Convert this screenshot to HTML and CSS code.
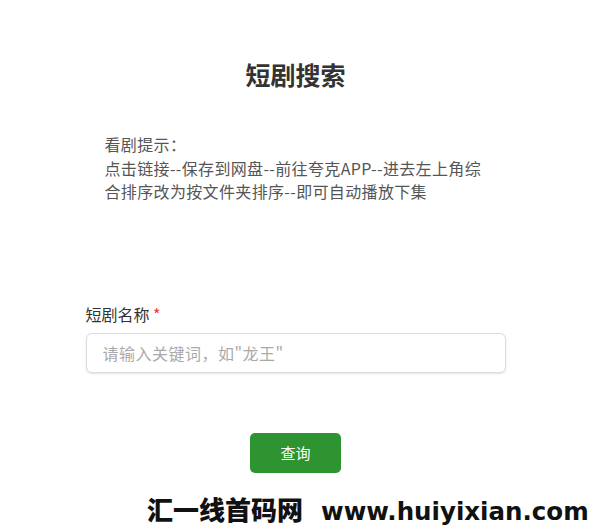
FILE: index.html
```html
<!DOCTYPE html>
<html lang="zh-CN">
<head>
<meta charset="utf-8">
<title>短剧搜索</title>
<link rel="stylesheet" href="styles.css">
</head>
<body>
<div class="page">
  <h1 class="title">短剧搜索</h1>
  <div class="hint">
    看剧提示：<br>
    点击链接--保存到网盘--前往夸克APP--进去左上角综合排序改为按文件夹排序--即可自动播放下集
  </div>
  <form class="form">
    <label class="label" for="q">短剧名称 <span class="req">*</span></label>
    <input class="input" id="q" type="text" placeholder="请输入关键词，如&quot;龙王&quot;">
    <div class="actions">
      <button class="btn" type="button">查询</button>
    </div>
  </form>
</div>
<div class="watermark"><span class="wm-cn">汇一线首码网</span><span class="wm-en">www.huiyixian.com</span></div>
</body>
</html>
```
FILE: styles.css
```css
html, body {
  margin: 0;
  padding: 0;
  background: #fff;
}
body {
  font-family: "Noto Sans CJK SC", "Noto Sans", sans-serif;
  color: #333;
  height: 526px;
  position: relative;
  overflow: hidden;
}
.page {
  width: 420px;
  margin: 0 auto;
  padding-top: 58px;
}
.title {
  margin: 0;
  text-align: center;
  font-size: 25px;
  line-height: 32px;
  font-weight: bold;
  color: #333;
}
.hint {
  margin-top: 43px;
  padding: 0 18px 0 19px;
  font-size: 16px;
  line-height: 23.5px;
  letter-spacing: 0.35px;
  color: #555;
}
.form {
  margin-top: 100px;
  display: flex;
  flex-direction: column;
}
.label {
  font-size: 16px;
  line-height: 20px;
  color: #333;
}
.req {
  color: #e33;
}
.input {
  margin-top: 9px;
  box-sizing: border-box;
  height: 40px;
  width: 420px;
  border: 1px solid #ddd;
  border-radius: 6px;
  box-shadow: 0 1px 2px rgba(0,0,0,0.12);
  padding: 0 16px;
  font-family: "Noto Sans CJK SC", "Noto Sans", sans-serif;
  font-size: 16px;
  letter-spacing: 0.5px;
  color: #333;
  outline: none;
}
.input::placeholder {
  color: #aaa;
}
.actions {
  margin-top: 60px;
  display: flex;
  justify-content: center;
}
.btn {
  width: 91px;
  height: 40px;
  border: none;
  border-radius: 5px;
  background: #2e9432;
  color: #fff;
  font-family: "Noto Sans CJK SC", "Noto Sans", sans-serif;
  font-size: 15px;
  cursor: pointer;
}
.watermark {
  position: absolute;
  left: 147px;
  top: 492px;
  white-space: nowrap;
  line-height: 34px;
  color: #111;
  display: flex;
  align-items: baseline;
  gap: 18px;
}
.wm-cn {
  font-family: "Noto Sans CJK SC", sans-serif;
  font-weight: 900;
  font-size: 26px;
}
.wm-en {
  font-family: "DejaVu Sans", sans-serif;
  font-weight: bold;
  font-size: 24.5px;
}
```
